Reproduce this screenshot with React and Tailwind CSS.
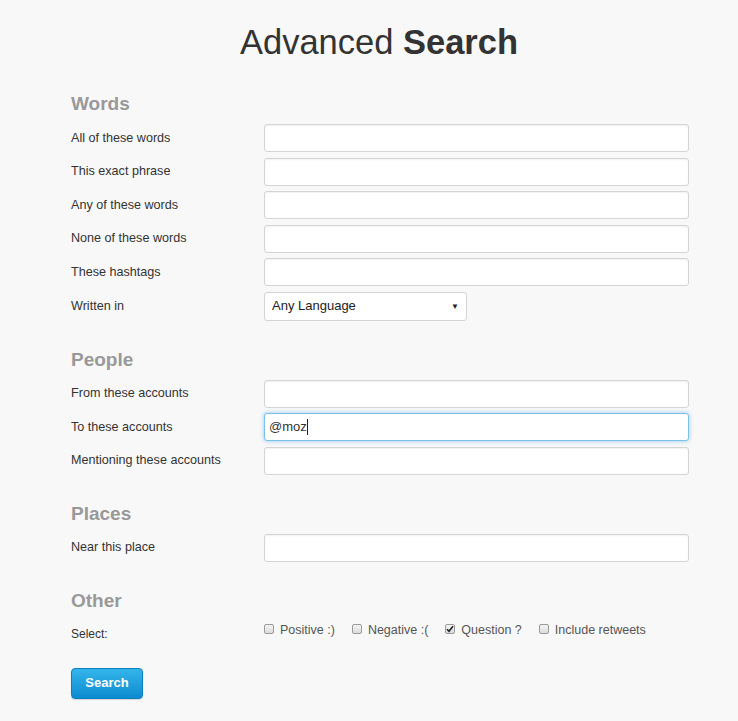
import React from 'react'

const FONT = { fontFamily: '"Liberation Sans", Arial, sans-serif' }

function TextRow({ label, value, focused }) {
  return (
    <div className="flex items-center h-[28px] mb-[5.5px]">
      <label className="w-[193px] shrink-0 text-[12.6px] text-[#333]">{label}</label>
      {focused ? (
        <div className="w-[425px] h-[28px] bg-white border border-[#7cc2e6] rounded-[3px] shadow-[0_0_4px_rgba(82,168,236,0.6)] flex items-center px-[4px] text-[13px] text-[#333]">
          {value}
          <span className="inline-block w-px h-[16px] bg-[#222]" />
        </div>
      ) : (
        <input
          type="text"
          defaultValue={value}
          className="w-[425px] h-[28px] bg-white border border-[#d4d4d4] rounded-[3px] shadow-[inset_0_1px_2px_rgba(0,0,0,0.06)] px-[6px] text-[13px] outline-none"
        />
      )}
    </div>
  )
}

function Heading({ children }) {
  return <h2 className="text-[19px] leading-[24px] font-bold text-[#999] mb-[8px]">{children}</h2>
}

function Check({ label, checked }) {
  return (
    <span className="flex items-center mr-[17px]">
      <span className="w-[10px] h-[10px] border border-[#9a9a9a] rounded-[2px] bg-gradient-to-b from-[#f4f4f4] to-[#dcdcdc] flex items-center justify-center mr-[6px] -mt-[4px]">
        {checked && (
          <svg width="8" height="8" viewBox="0 0 8 8">
            <path d="M1 4.2l2 2L7 1.2" fill="none" stroke="#222" strokeWidth="1.6" />
          </svg>
        )}
      </span>
      <span className="text-[12.5px] text-[#555]">{label}</span>
    </span>
  )
}

export default function App() {
  return (
    <div className="min-h-screen bg-[#f8f8f8] pl-[71px]" style={FONT}>
      <h1 className="pt-[22px] h-[62px] text-[34.5px] leading-[40px] text-[#333] text-center -ml-[71px] pl-[20px]">
        Advanced <span className="font-bold">Search</span>
      </h1>

      <section className="mt-[30px]">
        <Heading>Words</Heading>
        <TextRow label="All of these words" />
        <TextRow label="This exact phrase" />
        <TextRow label="Any of these words" />
        <TextRow label="None of these words" />
        <TextRow label="These hashtags" />
        <div className="flex items-center h-[29px]">
          <label className="w-[193px] shrink-0 text-[12.6px] text-[#333]">Written in</label>
          <div className="relative w-[203px] h-[29px] bg-white border border-[#d4d4d4] rounded-[3px] flex items-center px-[7px] text-[13px] text-[#222]">
            Any Language
            <span className="absolute right-[7px] top-[8px] text-[8px] text-[#222]">▼</span>
          </div>
        </div>
      </section>

      <section className="mt-[27px]">
        <Heading>People</Heading>
        <TextRow label="From these accounts" />
        <TextRow label="To these accounts" value="@moz" focused />
        <TextRow label="Mentioning these accounts" />
      </section>

      <section className="mt-[27px]">
        <Heading>Places</Heading>
        <TextRow label="Near this place" />
      </section>

      <section className="mt-[27px]">
        <Heading>Other</Heading>
        <div className="flex items-center h-[20px] mt-[8px]">
          <label className="w-[193px] shrink-0 text-[12px] text-[#333] mt-[6px]">Select:</label>
          <Check label="Positive :)" />
          <Check label="Negative :(" />
          <Check label="Question ?" checked />
          <Check label="Include retweets" />
        </div>
      </section>

      <button className="mt-[27px] w-[72px] h-[31px] rounded-[4px] border border-[#0b7fc0] bg-gradient-to-b from-[#33b5ea] to-[#0a8bd0] text-white text-[13px] font-bold shadow-[0_1px_1px_rgba(0,0,0,0.15)]">
        Search
      </button>
    </div>
  )
}
